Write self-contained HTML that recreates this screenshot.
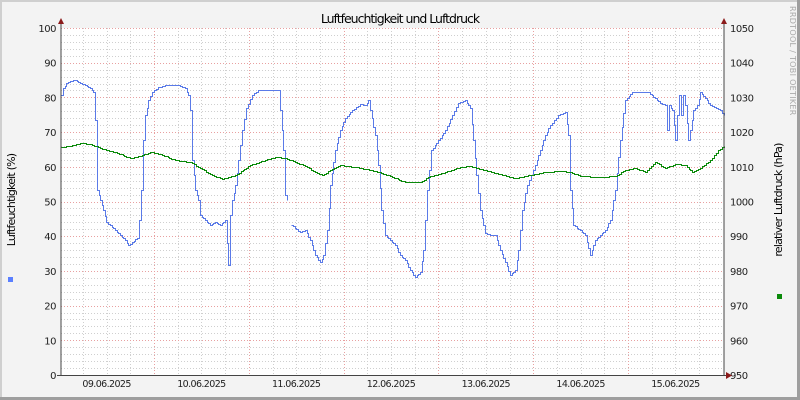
<!DOCTYPE html>
<html><head><meta charset="utf-8"><style>
html,body{margin:0;padding:0;background:#f3f3f3;}
svg{display:block;font-family:"DejaVu Sans","Liberation Sans",sans-serif;}
</style></head><body>
<svg id="s" width="800" height="400" viewBox="0 0 800 400" xmlns="http://www.w3.org/2000/svg">
<rect x="0" y="0" width="800" height="400" fill="#f3f3f3"/>
<rect x="0" y="0" width="2" height="400" fill="#cfcfcf"/>
<rect x="0" y="0" width="800" height="2" fill="#cfcfcf"/>
<rect x="797" y="0" width="3" height="400" fill="#9e9e9e"/>
<rect x="0" y="397" width="800" height="3" fill="#9e9e9e"/>
<rect x="61" y="28" width="663" height="347" fill="#ffffff"/>
<g id="grid"></g>
<text x="400" y="23" font-size="12.5" text-anchor="middle" fill="#000" letter-spacing="-1">Luftfeuchtigkeit und Luftdruck</text>
<g id="lab" font-size="10" fill="#222"></g>
<text transform="translate(15,200) rotate(-90)" font-size="11" text-anchor="middle" letter-spacing="-0.8">Luftfeuchtigkeit (%)</text>
<text transform="translate(782,200) rotate(-90)" font-size="11" text-anchor="middle" letter-spacing="-0.8">relativer Luftdruck (hPa)</text>
<text transform="translate(790,6) rotate(90)" font-size="8" fill="#aaa" letter-spacing="0.3">RRDTOOL / TOBI OETIKER</text>
<rect x="8" y="277" width="5" height="5" fill="#5a7fff"/>
<rect x="777" y="294" width="5" height="5" fill="#0a8a0a"/>
<polyline class="st" fill="none" stroke="#5a7ae8" stroke-width="1" points="61,95 63,88 66,83 70,81 75,80 78,82 85,85 90,88 93,92 95,120 97,190 100,200 103,210 106,222 110,225 115,230 120,235 125,240 128,245 132,242 137,238 139,220 141,190 143,140 145,115 148,100 152,92 158,87 165,85 178,85 185,88 188,95 190,110 192,160 195,190 198,200 200,215 205,220 210,225 215,222 220,225 225,220 228,265 230,215 232,200 235,185 238,160 242,130 246,108 252,95 258,90 278,90 280,110 283,150 285,195 287,200"/>
<polyline class="st" fill="none" stroke="#5a7ae8" stroke-width="1" points="291,225 300,232 305,230 310,240 315,255 320,262 323,255 327,230 330,185 335,150 340,130 345,118 352,110 360,104 365,105 368,100 370,110 375,135 378,165 381,210 385,235 390,240 395,245 400,255 405,260 410,270 415,277 420,272 423,250 427,190 431,150 438,140 445,130 452,115 458,103 465,100 470,108 473,140 476,175 480,210 485,233 490,235 495,235 500,250 505,262 510,275 515,270 518,250 522,210 527,185 533,170 540,150 545,135 550,125 558,115 565,112 568,135 570,190 573,225 580,230 585,235 590,255 595,240 600,235 605,230 610,220 615,190 620,140 625,100 632,92 648,92 655,98 660,103 665,105 667,130 669,105 672,110 675,140 677,115 679,95 681,115 683,95 685,105 688,140 690,130 693,110 697,105 700,92 705,98 710,105 720,110 724,115"/>
<polyline class="st" fill="none" stroke="#0a8a0a" stroke-width="1" points="61,147 70,146 80,143 90,144 100,148 115,152 130,158 140,156 150,152 160,154 175,160 190,162 200,168 210,174 222,179 235,175 250,165 265,160 275,157 285,158 295,162 305,166 315,172 322,175 330,170 340,165 355,167 375,171 390,176 405,182 420,182 430,176 445,172 460,167 470,166 485,170 500,174 515,178 530,175 545,172 560,171 570,172 580,176 600,177 615,176 625,170 635,168 645,172 655,162 665,168 675,164 685,165 692,172 700,168 710,160 718,150 724,146"/>
<line x1="61" y1="24" x2="61" y2="376" stroke="#444" stroke-width="1"/>
<line x1="724" y1="24" x2="724" y2="376" stroke="#444" stroke-width="1"/>
<line x1="57" y1="375.5" x2="730" y2="375.5" stroke="#444" stroke-width="1"/>
<polygon points="58,24 64,24 61,18" fill="#8b1a1a"/>
<polygon points="721,24 727,24 724,18" fill="#8b1a1a"/>
<polygon points="726,372 726,379 732,375.5" fill="#8b1a1a"/>
</svg>
<script>
var g=document.getElementById('grid'),lab=document.getElementById('lab'),h='';
function L(x1,y1,x2,y2,c){h+='<line x1="'+x1+'" y1="'+y1+'" x2="'+x2+'" y2="'+y2+'" stroke="'+c+'" stroke-width="1" stroke-dasharray="1,2"/>';}
for(var i=1;i<50;i++){var y=375-i*347/50;y=Math.round(y)+0.5;if(i%5)L(61,y,724,y,'#cfcfcf');}
var x0=59.2,d=94.8;
for(var k=0;k<29;k++){var x=x0+k*d/4;if(x<62||x>723)continue;if(k%4)L(Math.round(x)+0.5,28,Math.round(x)+0.5,375,'#cfcfcf');}
for(var k=1;k<8;k++){var x=Math.round(x0+k*d)+0.5;if(x<723)L(x,28,x,375,'#e8a0a0');}
for(var i=1;i<=10;i++){var y=Math.round(375-i*34.7)+0.5;L(61,y,724,y,'#e8a0a0');}
g.innerHTML=h;
var t='';
for(var i=0;i<=10;i++){var y=375-i*34.7+4;t+='<text x="56" y="'+y+'" text-anchor="end" letter-spacing="-0.5">'+(i*10)+'</text>';t+='<text x="730" y="'+y+'" letter-spacing="-0.5">'+(950+i*10)+'</text>';}
var days=['09','10','11','12','13','14','15'];
for(var k=0;k<7;k++){var x=x0+k*d+d/2;t+='<text x="'+x+'" y="387" text-anchor="middle" letter-spacing="-0.6" font-size="9.5">'+days[k]+'.06.2025</text>';}
lab.innerHTML=t;
// staircase conversion
var pl=document.querySelectorAll('polyline.st');
for(var j=0;j<pl.length;j++){
 var p=pl[j].getAttribute('points').trim().split(/\s+/).map(function(s){return s.split(',').map(Number);});
 var out=[];
 for(var i=0;i<p.length;i++){
  if(i>0){var a=p[i-1],b=p[i];var n=Math.max(1,Math.round(Math.abs(b[0]-a[0])/2));
   for(var s=1;s<=n;s++){var x=Math.round(a[0]+(b[0]-a[0])*s/n)+0.5,y=Math.round(a[1]+(b[1]-a[1])*s/n)+0.5;var py=out[out.length-1][1];out.push([x,py]);out.push([x,y]);}
  } else out.push([Math.round(p[0][0])+0.5,Math.round(p[0][1])+0.5]);
 }
 pl[j].setAttribute('points',out.map(function(q){return q[0]+','+q[1];}).join(' '));
}
</script>
</body></html>
